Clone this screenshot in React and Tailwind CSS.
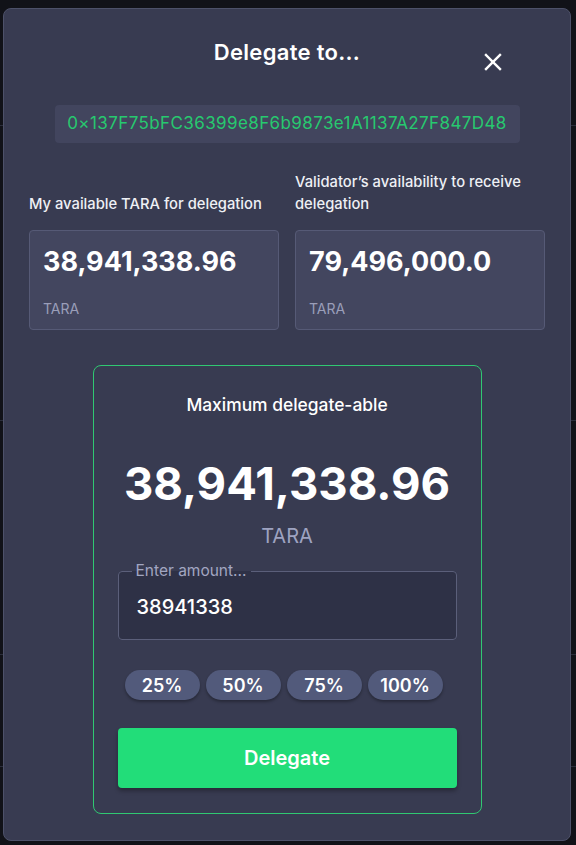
import React from "react";

const font = { fontFamily: "Inter, 'Noto Sans', sans-serif" };

function CloseIcon() {
  return (
    <svg width="18" height="18" viewBox="0 0 18 18" fill="none" stroke="white" strokeWidth="2.4" strokeLinecap="square">
      <line x1="2" y1="2" x2="16" y2="16" />
      <line x1="16" y1="2" x2="2" y2="16" />
    </svg>
  );
}

function StatCard({ value }) {
  return (
    <div className="h-[100px] rounded-[4px] border border-[#565a76] bg-[#43465f] pl-[13px] pt-[15px]">
      <p className="text-[27px] leading-[32px] font-bold text-white">{value}</p>
      <p className="mt-[21px] text-[14px] leading-[20px] text-[#9a9eb9]">TARA</p>
    </div>
  );
}

export default function App() {
  const chips = ["25%", "50%", "75%", "100%"];

  return (
    <div className="relative h-[845px] w-full overflow-hidden bg-[#111218]" style={font}>
      {/* page behind the modal */}
      <div className="flex flex-col">
        <div className="h-[126px] border-b border-[#2b2e3b]" />
        <div className="h-[295px] border-b border-[#2b2e3b]" />
        <div className="h-[234px] border-b border-[#2b2e3b]" />
        <div className="h-[112px] border-b border-[#2b2e3b]" />
      </div>

      {/* modal */}
      <div className="absolute left-[3px] top-[8px] w-[568px] h-[833px] rounded-[8px] border border-[#4d5169] bg-[#383b51] flex flex-col">
        <button className="absolute left-[480px] top-[44px]">
          <CloseIcon />
        </button>

        <h2 className="pt-[29px] text-center text-[22px] leading-[28px] font-semibold text-white tracking-[0.3px]">
          Delegate to...
        </h2>

        <div className="mx-auto mt-[39px] flex h-[38px] w-[465px] items-center justify-center rounded-[4px] bg-[#42455e] text-[17px] tracking-[0.4px] text-[#27c96f]">
          0×137F75bFC36399e8F6b9873e1A1137A27F847D48
        </div>

        <div className="mt-[28px] grid grid-cols-2 gap-x-4 px-[25px]">
          <div className="flex items-end">
            <p className="text-[14.75px] leading-[22px] font-medium text-[#eef0f5]">My available TARA for delegation</p>
          </div>
          <div className="flex items-end">
            <p className="text-[14.75px] leading-[22px] font-medium text-[#eef0f5]">Validator’s availability to receive delegation</p>
          </div>
          <div className="mt-[15px]">
            <StatCard value="38,941,338.96" />
          </div>
          <div className="mt-[15px]">
            <StatCard value="79,496,000.0" />
          </div>
        </div>

        <div className="mx-auto mt-[35px] w-[389px] rounded-[8px] border border-[#30c872] px-[24px] pt-[27px] pb-[25px] flex flex-col items-center">
          <p className="text-[17.4px] leading-[24px] font-medium text-white">Maximum delegate-able</p>
          <p className="mt-[41px] text-[45.5px] leading-[52px] font-bold text-white">38,941,338.96</p>
          <p className="mt-[12px] text-[20px] leading-[28px] text-[#9ea3c1]">TARA</p>

          <fieldset className="mt-[13px] h-[77px] w-full rounded-[4px] border border-[#5b5f7a] bg-[#2e3146] px-[18px]">
            <legend className="ml-[-5px] px-[4px] text-[15.5px] leading-[16px] text-[#a2a6c1]">Enter amount...</legend>
            <p className="mt-[14px] text-[20px] leading-[28px] font-medium text-white">38941338</p>
          </fieldset>

          <div className="mt-[30px] flex w-full gap-[6px] pl-[7px]">
            {chips.map((c) => (
              <button
                key={c}
                className="h-[30px] w-[75px] rounded-full bg-[#525a7b] text-[18px] font-semibold text-white shadow-[0_2px_3px_rgba(0,0,0,0.3)]"
              >
                {c}
              </button>
            ))}
          </div>

          <button className="mt-[28px] h-[60px] w-full rounded-[4px] bg-[#22dd79] text-[20px] font-semibold text-white shadow-[0_3px_4px_rgba(0,0,0,0.3)]">
            Delegate
          </button>
        </div>
      </div>
    </div>
  );
}
